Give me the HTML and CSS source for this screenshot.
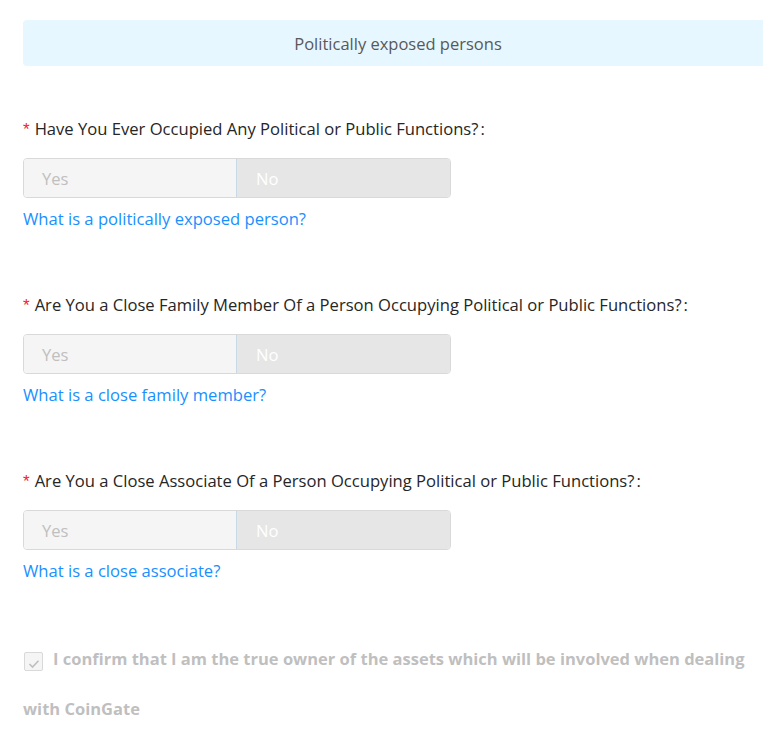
FILE: index.html
```html
<!DOCTYPE html>
<html>
<head>
<meta charset="utf-8">
<link rel="stylesheet" href="styles.css">
</head>
<body>
<div class="page">
  <div class="section-title">Politically exposed persons</div>

  <div class="question q-first">
    <div class="label"><span class="req">*</span>Have You Ever Occupied Any Political or Public Functions?<span class="colon">:</span></div>
    <div class="toggle">
      <div class="seg seg-yes">Yes</div>
      <div class="seg seg-no">No</div>
    </div>
    <a class="help">What is a politically exposed person?</a>
  </div>

  <div class="question">
    <div class="label"><span class="req">*</span>Are You a Close Family Member Of a Person Occupying Political or Public Functions?<span class="colon">:</span></div>
    <div class="toggle">
      <div class="seg seg-yes">Yes</div>
      <div class="seg seg-no">No</div>
    </div>
    <a class="help">What is a close family member?</a>
  </div>

  <div class="question">
    <div class="label"><span class="req">*</span>Are You a Close Associate Of a Person Occupying Political or Public Functions?<span class="colon">:</span></div>
    <div class="toggle">
      <div class="seg seg-yes">Yes</div>
      <div class="seg seg-no">No</div>
    </div>
    <a class="help">What is a close associate?</a>
  </div>

  <div class="confirm">
    <span class="box"><svg width="12" height="10" viewBox="0 0 12 10"><path d="M1.5 5 L4.5 8 L10.5 1.8" fill="none" stroke="#bfbfbf" stroke-width="1.6"/></svg></span>I confirm that I am the true owner of the assets which will be involved when dealing with CoinGate
  </div>
</div>
</body>
</html>
```

FILE: styles.css
```css
html, body {
  margin: 0;
  padding: 0;
  background: #fff;
  overflow: hidden;
}
body {
  font-family: "Open Sans", "Noto Sans", sans-serif;
  font-size: 16.6px;
  color: rgba(0, 0, 0, 0.85);
}
.page {
  padding: 20px 0 0 23px;
  width: 750px;
}
.section-title {
  height: 46px;
  line-height: 47px;
  background: #e6f7ff;
  border-radius: 4px;
  text-align: center;
  color: #595959;
  font-size: 16.5px;
  width: 750px;
}
.question {
  margin-top: 62px;
}
.question.q-first {
  margin-top: 51px;
}
.label {
  line-height: 24px;
  height: 24px;
  white-space: nowrap;
  color: #262626;
}
.req {
  color: #f5222d;
  font-size: 17px;
  margin-right: 5px;
  font-family: "Liberation Sans", sans-serif;
}
.colon {
  margin-left: 2px;
  margin-right: 2px;
}
.toggle {
  margin-top: 17px;
  display: flex;
  width: 428px;
  height: 40px;
  box-sizing: border-box;
  border: 1px solid #d9d9d9;
  border-radius: 4px;
  overflow: hidden;
}
.seg {
  flex: 1;
  line-height: 39px;
  padding-left: 18px;
  font-size: 16.6px;
}
.seg-yes {
  background: #f5f5f5;
  color: #bfbfbf;
  border-right: 1px solid #c9d8e6;
}
.seg-no {
  background: #e6e6e6;
  color: #fff;
  padding-left: 19px;
}
.help {
  display: block;
  margin-top: 9px;
  line-height: 24px;
  color: #1890ff;
  font-size: 16.6px;
  cursor: pointer;
}
.confirm {
  margin-top: 51px;
  line-height: 50px;
  font-weight: bold;
  color: #bfbfbf;
  font-size: 16.5px;
  width: 730px;
}
.box {
  display: inline-block;
  width: 19px;
  height: 19px;
  box-sizing: border-box;
  border: 1px solid #d9d9d9;
  border-radius: 2px;
  background: #f5f5f5;
  vertical-align: -3px;
  margin-left: 1px;
  margin-right: 10px;
  text-align: center;
  line-height: 17px;
}
.box svg {
  vertical-align: middle;
}
```
